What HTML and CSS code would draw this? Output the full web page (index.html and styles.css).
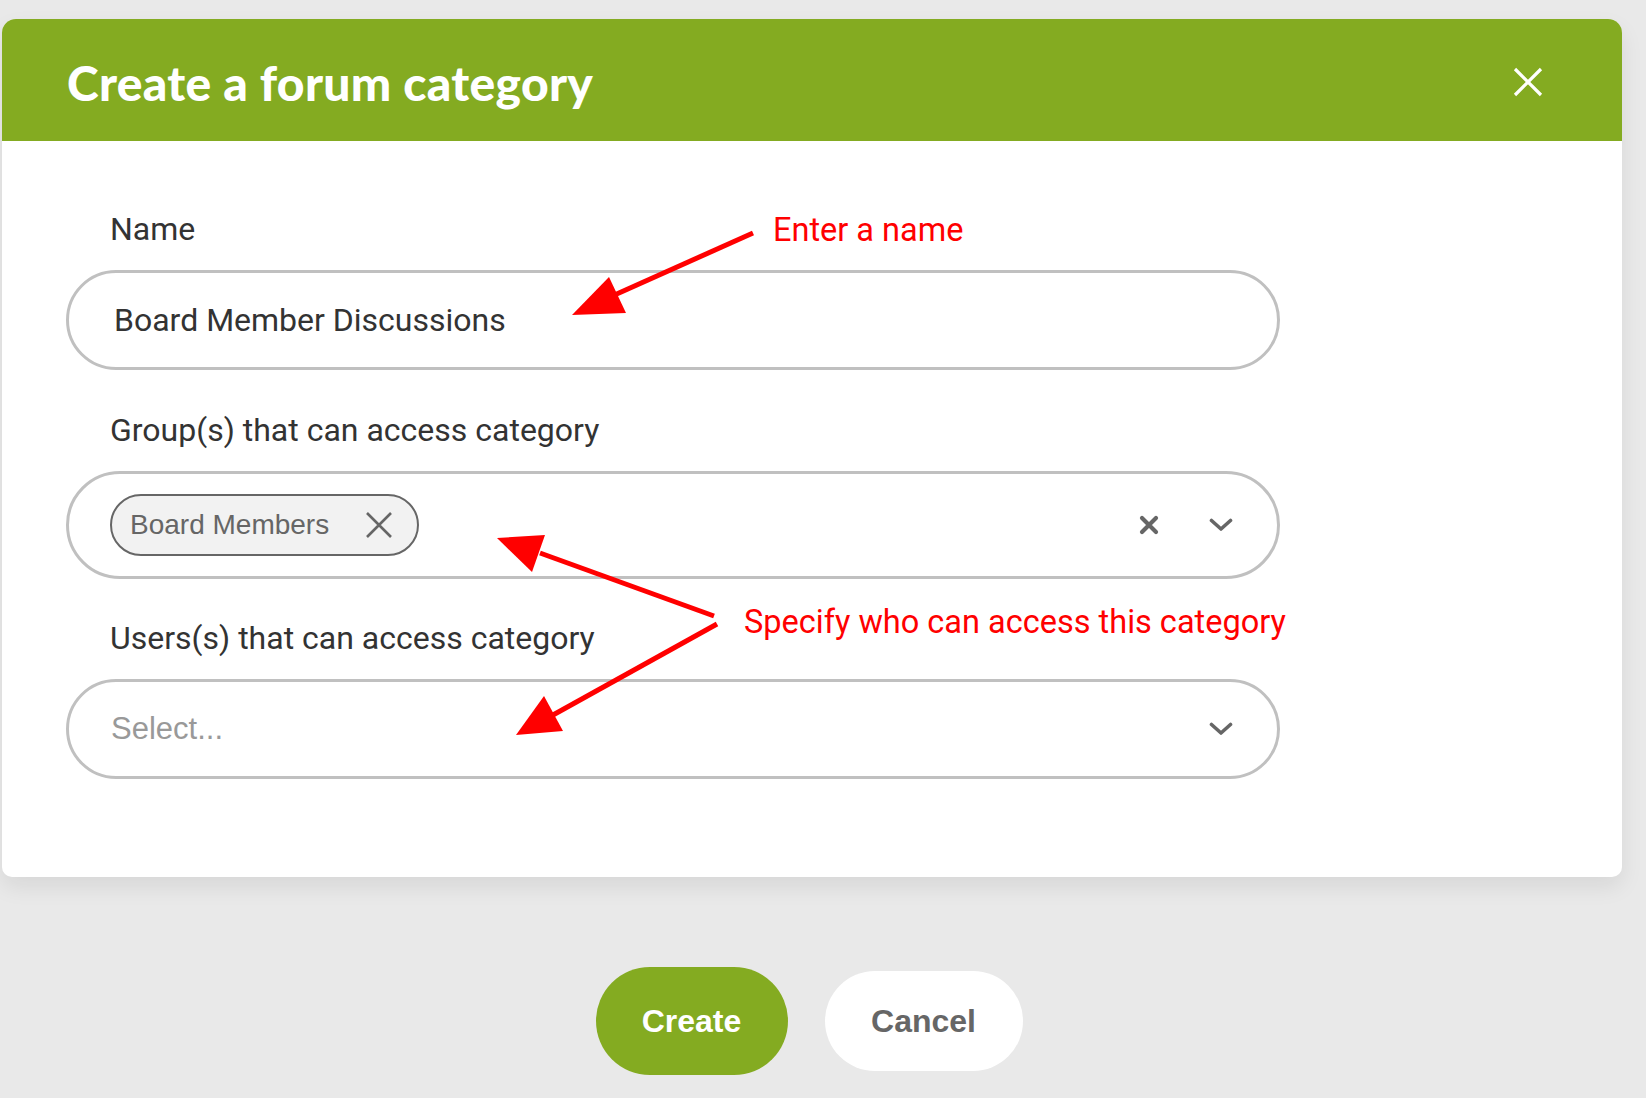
FILE: index.html
```html
<!DOCTYPE html>
<html lang="en">
<head>
    <meta charset="UTF-8">
    <meta name="viewport" content="width=device-width, initial-scale=1.0">
    <title>Create a forum category</title>
    <link rel="stylesheet" href="styles.css">
</head>
<body>
    <div class="page">
        <div class="modal">
            <div class="modal-head">
                <h1 class="modal-title">Create a forum category</h1>
                <button class="close-btn" aria-label="Close">
                    <svg width="30" height="30" viewBox="0 0 30 30"><path d="M2 2L28 28M28 2L2 28" stroke="#fff" stroke-width="3.2"/></svg>
                </button>
            </div>
            <div class="modal-body">
                <label class="field-label">Name</label>
                <div class="field field-input">Board Member Discussions</div>

                <label class="field-label">Group(s) that can access category</label>
                <div class="field field-select">
                    <div class="values">
                        <span class="chip">Board Members
                            <svg class="chip-x" width="28" height="28" viewBox="0 0 28 28"><path d="M2 2L26 26M26 2L2 26" stroke="#666" stroke-width="2.6"/></svg>
                        </span>
                    </div>
                    <svg class="clear-x" width="20" height="20" viewBox="0 0 20 20"><path d="M3 3L17 17M17 3L3 17" stroke="#666" stroke-width="4.2" stroke-linecap="round"/></svg>
                    <svg class="chevron" width="24" height="16" viewBox="0 0 24 16"><path d="M2.5 3.5L12 12L21.5 3.5" fill="none" stroke="#666" stroke-width="3.6" stroke-linecap="round" stroke-linejoin="round"/></svg>
                </div>

                <label class="field-label">Users(s) that can access category</label>
                <div class="field field-select users">
                    <div class="values placeholder">Select...</div>
                    <svg class="chevron" width="24" height="16" viewBox="0 0 24 16"><path d="M2.5 3.5L12 12L21.5 3.5" fill="none" stroke="#666" stroke-width="3.6" stroke-linecap="round" stroke-linejoin="round"/></svg>
                </div>
            </div>
        </div>

        <div class="actions">
            <button class="btn btn-create">Create</button>
            <button class="btn btn-cancel">Cancel</button>
        </div>

        <!-- annotations drawn over the screenshot -->
        <div class="note note-name">Enter a name</div>
        <div class="note note-access">Specify who can access this category</div>
        <svg class="arrows" width="1646" height="1098" viewBox="0 0 1646 1098">
            <g stroke="#ff0000" stroke-width="5" fill="#ff0000">
                <line x1="753" y1="233" x2="610" y2="297"/>
                <polygon points="572,315 609,277 626,313" stroke="none"/>
                <line x1="714" y1="616" x2="540" y2="553"/>
                <polygon points="497,538 545,535 532,572" stroke="none"/>
                <line x1="717" y1="624" x2="553" y2="715"/>
                <polygon points="516,735 544,696 563,731" stroke="none"/>
            </g>
        </svg>
    </div>
</body>
</html>
```

FILE: styles.css
```css
*{
    box-sizing: border-box;
}
body{
    margin: 0;
    background-color: #e9e9e9;
    font-family: Roboto, "Liberation Sans", sans-serif;
    color: #333;
}
.page{
    width: 1646px;
    height: 1098px;
    position: relative;
    padding-top: 19px;
    padding-left: 2px;
    overflow: hidden;
}
.modal{
    width: 1620px;
    background-color: #fff;
    border-radius: 14px 14px 10px 10px;
    box-shadow: 0 10px 22px rgba(0,0,0,0.08);
    overflow: hidden;
}
.modal-head{
    height: 122px;
    background-color: #84ab21;
    display: flex;
    align-items: center;
    justify-content: space-between;
    padding: 4px 79px 0 65px;
}
.modal-title{
    margin: 0;
    color: #fff;
    font-family: Lato, sans-serif;
    font-weight: 900;
    font-size: 48px;
    letter-spacing: 0.3px;
}
.close-btn{
    background: none;
    border: none;
    padding: 0;
    display: flex;
}
.modal-body{
    padding: 70px 0 98px 64px;
    display: flex;
    flex-direction: column;
    align-items: flex-start;
}
.field-label{
    display: block;
    font-size: 32px;
    line-height: 36px;
    color: #333;
    padding-left: 44px;
    margin-bottom: 23px;
}
.field{
    width: 1214px;
    border: 3px solid #c0c0c0;
    border-radius: 60px;
    display: flex;
    align-items: center;
}
.field-input{
    height: 100px;
    padding-left: 45px;
    font-size: 32px;
    color: #333;
    margin-bottom: 42px;
}
.field-select{
    height: 108px;
    padding: 0 44px 0 41px;
    margin-bottom: 41px;
}
.field-select.users{
    height: 100px;
    margin-bottom: 0;
}
.values{
    flex: 1;
    display: flex;
    align-items: center;
}
.placeholder{
    font-family: "Liberation Sans", Arial, sans-serif;
    font-size: 31px;
    color: #999;
    padding-left: 1px;
}
.chip{
    display: flex;
    align-items: center;
    gap: 36px;
    height: 62px;
    padding: 0 24px 0 18px;
    border: 2px solid #666;
    border-radius: 31px;
    background-color: #f2f2f2;
    font-family: "Liberation Sans", Arial, sans-serif;
    font-size: 28px;
    color: #666;
}
.clear-x{
    margin-right: 50px;
}
.actions{
    display: flex;
    justify-content: center;
    align-items: center;
    gap: 37px;
    width: 1614px;
    margin-top: 90px;
}
.btn{
    border: none;
    border-radius: 54px;
    font-family: "Liberation Sans", Arial, sans-serif;
    font-weight: bold;
    font-size: 32px;
}
.btn-create{
    width: 192px;
    height: 108px;
    background-color: #84ab21;
    color: #fff;
}
.btn-cancel{
    width: 198px;
    height: 100px;
    background-color: #fff;
    color: #666;
}
.note{
    position: absolute;
    color: #ff0000;
    font-family: Roboto, "Liberation Sans", sans-serif;
    font-size: 32.5px;
    line-height: 36px;
}
.note-name{
    left: 773px;
    top: 212px;
}
.note-access{
    left: 744px;
    top: 604px;
}
.arrows{
    position: absolute;
    left: 0;
    top: 0;
    pointer-events: none;
}
```
